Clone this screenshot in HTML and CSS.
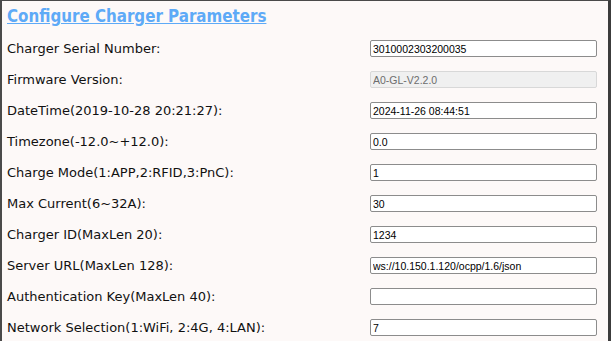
FILE: index.html
```html
<!DOCTYPE html>
<html lang="en">
<head>
    <meta charset="UTF-8">
    <meta name="viewport" content="width=device-width, initial-scale=1.0">
    <title>Configure Charger Parameters</title>
    <link rel="stylesheet" href="styles.css">
</head>
<body>
    <div class="frame">
        <h2 class="title">Configure Charger Parameters</h2>

        <div class="row">
            <label for="serial">Charger Serial Number:</label>
            <input type="text" id="serial" class="field" value="3010002303200035">
        </div>
        <div class="row">
            <label for="firmware">Firmware Version:</label>
            <input type="text" id="firmware" class="field" value="A0-GL-V2.2.0" disabled>
        </div>
        <div class="row">
            <label for="datetime">DateTime(2019-10-28 20:21:27):</label>
            <input type="text" id="datetime" class="field" value="2024-11-26 08:44:51">
        </div>
        <div class="row">
            <label for="timezone">Timezone(-12.0~+12.0):</label>
            <input type="text" id="timezone" class="field" value="0.0">
        </div>
        <div class="row">
            <label for="mode">Charge Mode(1:APP,2:RFID,3:PnC):</label>
            <input type="text" id="mode" class="field" value="1">
        </div>
        <div class="row">
            <label for="current">Max Current(6~32A):</label>
            <input type="text" id="current" class="field" value="30">
        </div>
        <div class="row">
            <label for="chargerId">Charger ID(MaxLen 20):</label>
            <input type="text" id="chargerId" class="field" value="1234">
        </div>
        <div class="row">
            <label for="server">Server URL(MaxLen 128):</label>
            <input type="text" id="server" class="field" value="ws://10.150.1.120/ocpp/1.6/json">
        </div>
        <div class="row">
            <label for="authKey">Authentication Key(MaxLen 40):</label>
            <input type="text" id="authKey" class="field" value="">
        </div>
        <div class="row">
            <label for="network">Network Selection(1:WiFi, 2:4G, 4:LAN):</label>
            <input type="text" id="network" class="field" value="7">
        </div>
    </div>
</body>
</html>
```

FILE: styles.css
```css
html, body {
    margin: 0;
    padding: 0;
    height: 100%;
    background-color: #fdf9f8;
}
body {
    font-family: "DejaVu Sans", sans-serif;
    color: #111;
    overflow: hidden;
}
.frame {
    height: 100%;
    box-sizing: border-box;
    border-left: 2px solid #4a4a4a;
    border-top: 1px solid #4a4a4a;
    border-right: 3px solid #3c3c3c;
    padding-left: 5px;
}
.title {
    margin: 0;
    height: 32px;
    line-height: 31px;
    font-family: "DejaVu Sans Condensed", "DejaVu Sans", sans-serif;
    font-size: 16.8px;
    font-weight: bold;
    color: #5eaaf7;
    text-decoration: underline;
}
.row {
    display: flex;
    align-items: center;
    height: 31px;
}
.row label {
    width: 363px;
    font-size: 13px;
}
.field {
    width: 227px;
    height: 17px;
    box-sizing: border-box;
    padding: 0 2px;
    margin: 0;
    border: 1px solid #8c8c8c;
    border-radius: 2px;
    background-color: #fff;
    font-family: "Liberation Sans", Arial, sans-serif;
    font-size: 10.5px;
    color: #000;
}
.field:disabled {
    background-color: #f0f0f0;
    border-color: #d8d8d8;
    color: #6d6d6d;
}
```
